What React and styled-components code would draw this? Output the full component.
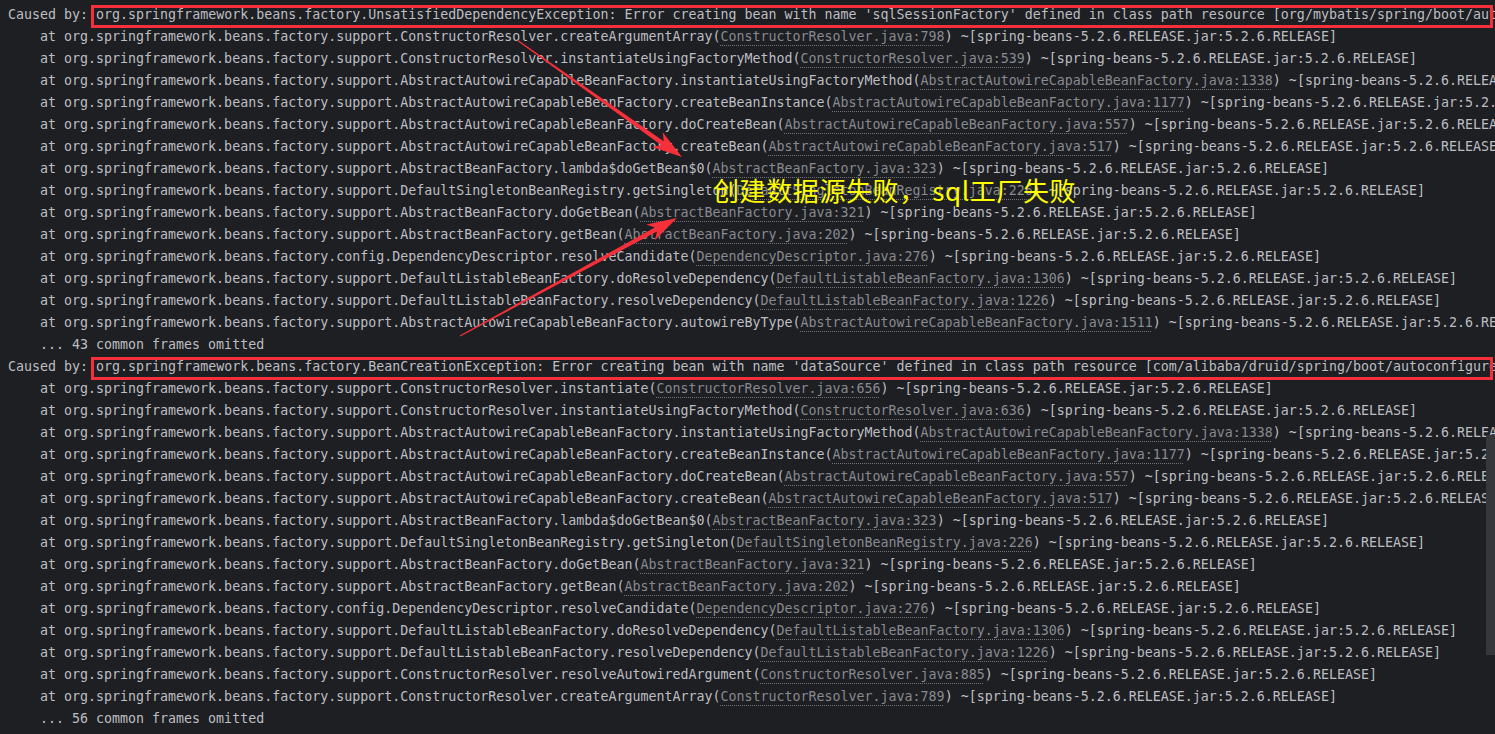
import React from 'react';
import styled, { createGlobalStyle } from 'styled-components';

const Global = createGlobalStyle`
  html, body { margin: 0; padding: 0; background: #1e1f22; overflow: hidden; }
  body { width: 1495px; height: 734px; }
`;

const Console = styled.div`
  position: relative;
  width: 1495px;
  height: 734px;
  box-sizing: border-box;
  padding: 4px 0 0 8px;
  background: #1e1f22;
  color: #bcbec4;
  font-family: "DejaVu Sans Mono", "Liberation Mono", monospace;
  font-size: 13.3px;
  display: flex;
  flex-direction: column;
`;

const Line = styled.div`
  height: 22px;
  line-height: 22px;
  display: flex;
  white-space: pre;
  padding-left: ${(p) => (p.$indent ? '32px' : '0')};
  flex-shrink: 0;
`;

const Boxed = styled.span`
  position: relative;
  flex: 1;
  min-width: 0;
  &::after {
    content: '';
    position: absolute;
    top: 1px;
    bottom: -2px;
    left: -5px;
    right: 2px;
    border: 3px solid #f5303a;
    pointer-events: none;
  }
`;

const Src = styled.span`
  color: #878a91;
  text-decoration: underline dotted #6f7278;
  text-underline-offset: 4px;
  text-decoration-thickness: 1px;
`;

const Note = styled.div`
  position: absolute;
  left: 713px;
  top: 172px;
  font-family: "Noto Sans CJK SC", "Noto Sans", sans-serif;
  font-size: 26px;
  line-height: 36px;
  letter-spacing: 0.6px;
  color: #ffff00;
  white-space: pre;
`;

const Overlay = styled.svg`
  position: absolute;
  left: 0;
  top: 0;
  width: 1495px;
  height: 734px;
  pointer-events: none;
`;

const ScrollThumb = styled.div`
  position: absolute;
  right: 0;
  top: 435px;
  width: 9px;
  height: 220px;
  background: #36373a;
`;

const PKG = 'org.springframework.beans.factory.support.';
const JAR = 'spring-beans-5.2.6.RELEASE.jar:5.2.6.RELEASE';

const block1 = [
  ['ConstructorResolver.createArgumentArray', 'ConstructorResolver.java:798'],
  ['ConstructorResolver.instantiateUsingFactoryMethod', 'ConstructorResolver.java:539'],
  ['AbstractAutowireCapableBeanFactory.instantiateUsingFactoryMethod', 'AbstractAutowireCapableBeanFactory.java:1338'],
  ['AbstractAutowireCapableBeanFactory.createBeanInstance', 'AbstractAutowireCapableBeanFactory.java:1177'],
  ['AbstractAutowireCapableBeanFactory.doCreateBean', 'AbstractAutowireCapableBeanFactory.java:557'],
  ['AbstractAutowireCapableBeanFactory.createBean', 'AbstractAutowireCapableBeanFactory.java:517'],
  ['AbstractBeanFactory.lambda$doGetBean$0', 'AbstractBeanFactory.java:323'],
  ['DefaultSingletonBeanRegistry.getSingleton', 'DefaultSingletonBeanRegistry.java:226'],
  ['AbstractBeanFactory.doGetBean', 'AbstractBeanFactory.java:321'],
  ['AbstractBeanFactory.getBean', 'AbstractBeanFactory.java:202'],
  ['!org.springframework.beans.factory.config.DependencyDescriptor.resolveCandidate', 'DependencyDescriptor.java:276'],
  ['DefaultListableBeanFactory.doResolveDependency', 'DefaultListableBeanFactory.java:1306'],
  ['DefaultListableBeanFactory.resolveDependency', 'DefaultListableBeanFactory.java:1226'],
  ['AbstractAutowireCapableBeanFactory.autowireByType', 'AbstractAutowireCapableBeanFactory.java:1511'],
];

const block2 = [
  ['ConstructorResolver.instantiate', 'ConstructorResolver.java:656'],
  ['ConstructorResolver.instantiateUsingFactoryMethod', 'ConstructorResolver.java:636'],
  ['AbstractAutowireCapableBeanFactory.instantiateUsingFactoryMethod', 'AbstractAutowireCapableBeanFactory.java:1338'],
  ['AbstractAutowireCapableBeanFactory.createBeanInstance', 'AbstractAutowireCapableBeanFactory.java:1177'],
  ['AbstractAutowireCapableBeanFactory.doCreateBean', 'AbstractAutowireCapableBeanFactory.java:557'],
  ['AbstractAutowireCapableBeanFactory.createBean', 'AbstractAutowireCapableBeanFactory.java:517'],
  ['AbstractBeanFactory.lambda$doGetBean$0', 'AbstractBeanFactory.java:323'],
  ['DefaultSingletonBeanRegistry.getSingleton', 'DefaultSingletonBeanRegistry.java:226'],
  ['AbstractBeanFactory.doGetBean', 'AbstractBeanFactory.java:321'],
  ['AbstractBeanFactory.getBean', 'AbstractBeanFactory.java:202'],
  ['!org.springframework.beans.factory.config.DependencyDescriptor.resolveCandidate', 'DependencyDescriptor.java:276'],
  ['DefaultListableBeanFactory.doResolveDependency', 'DefaultListableBeanFactory.java:1306'],
  ['DefaultListableBeanFactory.resolveDependency', 'DefaultListableBeanFactory.java:1226'],
  ['ConstructorResolver.resolveAutowiredArgument', 'ConstructorResolver.java:885'],
  ['ConstructorResolver.createArgumentArray', 'ConstructorResolver.java:789'],
];

function Frame({ method, src }) {
  const full = method.startsWith('!') ? method.slice(1) : PKG + method;
  return (
    <Line $indent>
      {'at ' + full + '('}
      <Src>{src}</Src>
      {') ~[' + JAR + ']'}
    </Line>
  );
}

function Cause({ text }) {
  return (
    <Line>
      <span>{'Caused by: '}</span>
      <Boxed>{text}</Boxed>
    </Line>
  );
}

function arrowPoints(tx, ty, px, py) {
  const dx = px - tx;
  const dy = py - ty;
  const len = Math.hypot(dx, dy);
  const ux = dx / len;
  const uy = dy / len;
  const nx = -uy;
  const ny = ux;
  const L = 30;
  const W = 9;
  const neckL = 24;
  const pt = (along, side) => [px - ux * along + nx * side, py - uy * along + ny * side];
  const pts = [
    [tx + nx * 0.6, ty + ny * 0.6],
    pt(neckL, 2.2),
    pt(L, W),
    [px, py],
    pt(L, -W),
    pt(neckL, -2.2),
    [tx - nx * 0.6, ty - ny * 0.6],
  ];
  return pts.map((p) => p[0].toFixed(1) + ',' + p[1].toFixed(1)).join(' ');
}

export default function App() {
  return (
    <>
      <Global />
      <Console>
        <Cause text="org.springframework.beans.factory.UnsatisfiedDependencyException: Error creating bean with name 'sqlSessionFactory' defined in class path resource [org/mybatis/spring/boot/autoconfigure/MybatisAutoConfiguration.class]: Unsatisfied dependency expressed through method 'sqlSessionFactory' parameter 0" />
        {block1.map(([m, s], i) => (
          <Frame key={'a' + i} method={m} src={s} />
        ))}
        <Line $indent>... 43 common frames omitted</Line>
        <Cause text="org.springframework.beans.factory.BeanCreationException: Error creating bean with name 'dataSource' defined in class path resource [com/alibaba/druid/spring/boot/autoconfigure/DruidDataSourceAutoConfigure.class]: Invocation of init method failed" />
        {block2.map(([m, s], i) => (
          <Frame key={'b' + i} method={m} src={s} />
        ))}
        <Line $indent>... 56 common frames omitted</Line>

        <Overlay viewBox="0 0 1495 734">
          <polygon points={arrowPoints(517, 40, 682, 157)} fill="#f5303a" />
          <polygon points={arrowPoints(460, 336, 677, 218)} fill="#f5303a" />
        </Overlay>
        <Note>{'创建数据源失败， sql工厂失败'}</Note>
        <ScrollThumb />
      </Console>
    </>
  );
}
